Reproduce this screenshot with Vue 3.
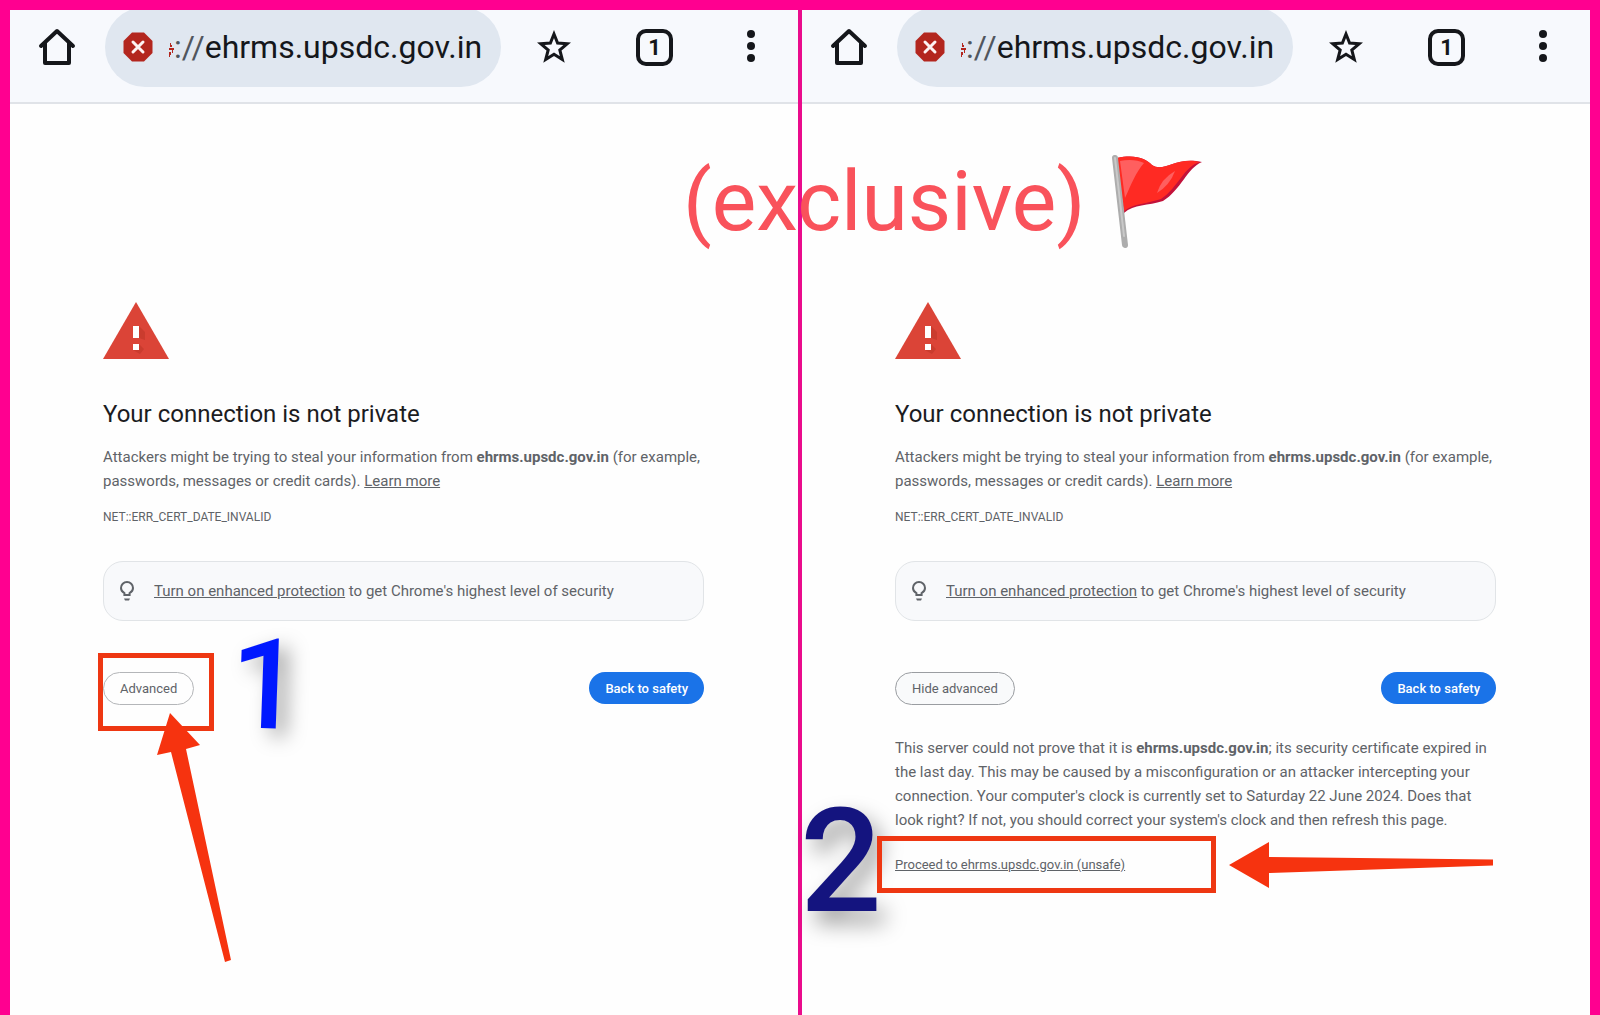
<template>
  <main class="collage">
    <section v-for="panel in panels" :key="panel.id" class="panel">
      <header class="toolbar">
        <div class="toolbar-row">
          <button class="icon-btn home" aria-label="Home">
            <svg width="38" height="38" viewBox="0 0 38 38" fill="none" stroke="#15171b" stroke-width="4" stroke-linejoin="round" stroke-linecap="round">
              <path d="M3 18 L19 3 L35 18 M7 15 V35 H31 V15" />
            </svg>
          </button>
          <div class="omnibox">
            <svg class="danger" width="30" height="30" viewBox="0 0 30 30">
              <path d="M9 0.5 H21 L29.5 9 V21 L21 29.5 H9 L0.5 21 V9 Z" fill="#b3261e" />
              <path d="M10 10 L20 20 M20 10 L10 20" stroke="#fdf3f3" stroke-width="3" stroke-linecap="round" />
            </svg>
            <!-- tail of the struck-out scheme, scrolled under the icon -->
            <svg class="scheme" width="5" height="16" viewBox="0 0 5 16">
              <path d="M1 1 H2 V3 H3 V5 H1 Z M0 6 H5 V8 H4 V11 H3 V8 H0 Z M0 10 H2 V13 H1 V15 H0 Z" fill="#b3261e" />
            </svg>
            <span class="url"><span class="slashes">://</span>{{ host }}</span>
          </div>
          <button class="icon-btn star" aria-label="Bookmark">
            <svg width="34" height="34" viewBox="0 0 34 34" fill="none" stroke="#15171b" stroke-width="3">
              <path d="M17 4 L20.6 13 L30.3 13.7 L22.8 20 L25.3 29.5 L17 24.3 L8.7 29.5 L11.2 20 L3.7 13.7 L13.4 13 Z" />
            </svg>
          </button>
          <button class="icon-btn tabs" aria-label="Open tabs">1</button>
          <button class="icon-btn menu" aria-label="More options">
            <svg width="8" height="34" viewBox="0 0 8 34" fill="#15171b">
              <circle cx="4" cy="4" r="4" />
              <circle cx="4" cy="16" r="4" />
              <circle cx="4" cy="28" r="4" />
            </svg>
          </button>
        </div>
      </header>

      <article class="content">
        <svg class="warning" width="66" height="57" viewBox="0 0 66 57">
          <path d="M33 0 L66 57 H0 Z" fill="#db4437" />
          <path d="M36 24 L42 30 V38 L36 36 Z M36 42 L41 47 L37 52 L30 48 H36 Z" fill="#b93425" opacity="0.5" />
          <path d="M30 24 h6 v12 h-6 Z M30 42 h6 v6 h-6 Z" fill="#fff" />
        </svg>
        <h1>Your connection is not private</h1>
        <p class="body-text">
          Attackers might be trying to steal your information from <strong>{{ host }}</strong> (for example, passwords, messages or credit cards). <a href="#">Learn more</a>
        </p>
        <p class="error-code">NET::ERR_CERT_DATE_INVALID</p>

        <div class="suggestion">
          <svg width="14" height="20" viewBox="0 0 14 20">
            <path d="M4.4 14 V12.2 C2.3 11 1 9.2 1 7 A6 6 0 0 1 13 7 C13 9.2 11.7 11 9.6 12.2 V14 Z" fill="none" stroke="#5f6368" stroke-width="2" />
            <path d="M4 17.5 H10 L9 19.5 H5 Z" fill="#5f6368" />
          </svg>
          <span class="suggestion-text"><a href="#">Turn on enhanced protection</a> to get Chrome's highest level of security</span>
        </div>

        <div class="actions">
          <button class="btn btn-outline" :class="{ focused: panel.expanded }">{{ panel.toggle }}</button>
          <button class="btn btn-primary">Back to safety</button>
        </div>

        <div v-if="panel.expanded" class="details">
          <p class="body-text">
            This server could not prove that it is <strong>{{ host }}</strong>; its security certificate expired in the last day. This may be caused by a misconfiguration or an attacker intercepting your connection. Your computer's clock is currently set to Saturday 22 June 2024. Does that look right? If not, you should correct your system's clock and then refresh this page.
          </p>
          <a class="proceed" href="#">Proceed to {{ host }} (unsafe)</a>
        </div>
      </article>

      <!-- hand-drawn marks over the page -->
      <template v-if="panel.expanded">
        <span class="step step-two">2</span>
        <div class="frame frame-proceed"></div>
        <svg class="arrow arrow-proceed" width="266" height="48" viewBox="0 0 266 48">
          <path d="M1 24 L41 1 V16 L265 18.5 V24.5 L41 32 V47 Z" fill="#f6330f" />
        </svg>
      </template>
      <template v-else>
        <span class="step step-one">1</span>
        <div class="frame frame-advanced"></div>
        <svg class="arrow arrow-advanced" width="76" height="252" viewBox="0 0 76 252">
          <path d="M14 1 L44 33 L30 37 L75 248 L69 250 L15 40 L1 43 Z" fill="#f6330f" />
        </svg>
      </template>
    </section>

    <div class="caption">
      <span>(exclusive)</span>
      <svg width="92" height="96" viewBox="0 0 92 96">
        <path d="M6 4 C25 0 35 5 41 11 C53 19 65 2 91 8 C76 14 70 36 52 47 C37 52 23 50 13 59 Z" fill="#c2123a" />
        <path d="M6 4 C25 0 35 5 41 11 C53 19 65 2 89 8 C73 12 67 34 50 45 C36 50 23 49 13 57 Z" fill="#ff2a23" />
        <path d="M9 7 C18 5 27 6 33 9 C25 18 20 31 14 44 Z" fill="#ff5f5f" />
        <path d="M64 17 Q50 25 46 39 Q59 31 64 17 Z" fill="#ff5f5f" />
        <path d="M4 4 L14 91" stroke="#adadad" stroke-width="6" stroke-linecap="round" />
        <path d="M4 4 L13 82" stroke="#c9c9c9" stroke-width="2" stroke-linecap="round" />
      </svg>
    </div>
  </main>
</template>

<script setup>
const host = 'ehrms.upsdc.gov.in'

const panels = [
  { id: 'collapsed', toggle: 'Advanced', expanded: false },
  { id: 'expanded', toggle: 'Hide advanced', expanded: true }
]
</script>

<style>
body {
  margin: 0;
}
</style>

<style scoped>
.collage {
  position: relative;
  box-sizing: border-box;
  min-height: 100vh;
  display: grid;
  grid-template-columns: 1fr 1fr;
  gap: 4px;
  padding: 10px 10px 0;
  background: linear-gradient(#ff0090, #ff0090) top / 100% 10px no-repeat,
    linear-gradient(90deg, #ff0090 10px, #ea0c8c 10px calc(100% - 10px), #ff0090 0);
  font-family: Roboto, "Liberation Sans", sans-serif;
}

.panel {
  position: relative;
  min-width: 0;
  background: #fefefe;
}

.toolbar {
  overflow: hidden;
  padding-bottom: 18px;
  background: #f7f9fd;
  border-bottom: 2px solid #e0e3e8;
}

.toolbar-row {
  display: flex;
  align-items: center;
  height: 74px;
  padding: 0 43px 0 28px;
}

.icon-btn {
  display: flex;
  flex: none;
  padding: 0;
  border: 0;
  background: none;
  color: #15171b;
  font-family: inherit;
}

.omnibox {
  display: flex;
  flex: 1;
  align-items: center;
  height: 80px;
  margin: 0 36px 0 29px;
  border-radius: 40px;
  background: #e0e7f0;
}

.danger {
  flex: none;
  margin-left: 18px;
}

.scheme {
  flex: none;
  margin: 6px 0 0 16px;
}

.url {
  color: #15171b;
  font-size: 32px;
  line-height: 40px;
  white-space: nowrap;
}

.slashes {
  color: #50565e;
}

.tabs {
  align-items: center;
  justify-content: center;
  box-sizing: border-box;
  width: 37px;
  height: 37px;
  margin: 0 74px 0 65px;
  border: 4px solid #15171b;
  border-radius: 10px;
  font-size: 22px;
  font-weight: 700;
}

.content {
  padding: 198px 94px 40px 93px;
  color: #5f6368;
}

.content a {
  color: inherit;
  text-decoration: underline;
}

.warning {
  display: block;
}

h1 {
  margin: 40px 0 16px;
  color: #1b1c1f;
  font-size: 24px;
  font-weight: 400;
  line-height: 30px;
}

.body-text {
  margin: 0;
  font-size: 15px;
  line-height: 24px;
}

.error-code {
  margin: 15px 0 0;
  font-size: 12px;
  line-height: 18px;
}

.suggestion {
  display: flex;
  align-items: center;
  gap: 20px;
  box-sizing: border-box;
  height: 60px;
  margin-top: 35px;
  padding: 0 16px;
  border: 1px solid #e1e4e7;
  border-radius: 20px;
  background: #f8f9fb;
}

.suggestion-text {
  font-size: 15px;
  line-height: 24px;
}

.actions {
  display: flex;
  justify-content: space-between;
  align-items: flex-start;
  margin-top: 51px;
}

.btn {
  height: 32px;
  padding: 0 16px;
  border: 0;
  border-radius: 16px;
  font-family: inherit;
  font-size: 13px;
}

.btn-outline {
  height: 33px;
  border: 1px solid #b4b6b9;
  border-radius: 17px;
  background: #fefefe;
  color: #5f6368;
}

.btn-outline.focused {
  border-color: #9a9da1;
  background: #f9fafb;
}

.btn-primary {
  background: #1a73e8;
  color: #fff;
  font-weight: 500;
}

.details {
  margin-top: 31px;
}

.proceed {
  display: inline-block;
  margin-top: 23px;
  font-size: 13px;
  line-height: 20px;
}

.frame {
  position: absolute;
  box-sizing: border-box;
  border: 5px solid #ee3712;
}

.frame-advanced {
  top: 643px;
  left: 88px;
  width: 116px;
  height: 78px;
}

.frame-proceed {
  top: 826px;
  left: 75px;
  width: 339px;
  height: 57px;
}

.arrow {
  position: absolute;
}

.arrow-advanced {
  top: 702px;
  left: 146px;
}

.arrow-proceed {
  top: 831px;
  left: 426px;
}

.step {
  position: absolute;
  line-height: 1;
  font-weight: 500;
}

.step-one {
  top: 612px;
  left: 220px;
  color: #0018ff;
  font-size: 126px;
  text-shadow: 10px 8px 20px rgba(0, 0, 0, 0.35);
  transform: rotate(2deg);
}

.step-two {
  top: 780px;
  left: -2px;
  color: #14147f;
  font-size: 144px;
  text-shadow: 8px 12px 22px rgba(0, 0, 0, 0.4);
}

.caption {
  position: absolute;
  top: 152px;
  left: calc(50% - 117px);
  display: flex;
  align-items: center;
  gap: 25px;
  color: #f9525b;
  font-size: 84px;
  line-height: 100px;
}
</style>
